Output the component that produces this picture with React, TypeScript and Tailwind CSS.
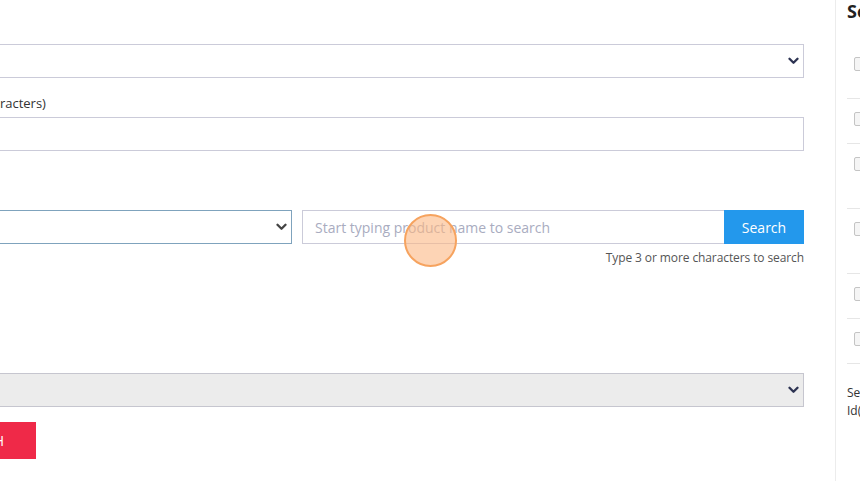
import React from "react";

function Chevron({ color }: { color: string }) {
  return (
    <svg width="11" height="8" viewBox="0 0 11 8" fill="none">
      <path d="M1.5 1.8 L5.5 5.8 L9.5 1.8" stroke={color} strokeWidth="2.3" strokeLinecap="round" strokeLinejoin="round" />
    </svg>
  );
}

function Check() {
  return <span className="mt-[13px] ml-[7px] block w-[14px] h-[14px] shrink-0 rounded-[2px] border border-[#c4c4c4] bg-[#f5f5f5]" />;
}

export default function App() {
  return (
    <div className="relative flex w-[860px] h-[481px] overflow-hidden bg-white text-[#333] font-['Open_Sans',sans-serif]">
      <main className="w-[835px] shrink-0 overflow-hidden">
        <div className="ml-[-186px] w-[990px] flex flex-col">
          <label className="pt-[16px] leading-[20px] mb-[8px] text-[13px]">Type</label>
          <div className="h-[34px] flex items-center justify-end pr-[4px] border border-[#cbcbd9] bg-white">
            <Chevron color="#2d3352" />
          </div>

          <label className="mt-[15px] mb-[4px] leading-[20px] text-[13px] whitespace-nowrap">Meta description (max 160 characters)</label>
          <div className="h-[34px] border border-[#cbcbd9] bg-white" />

          <label className="mt-[31px] mb-[8px] leading-[20px] text-[13px]">Product</label>
          <div className="flex h-[34px]">
            <div className="w-[478px] flex items-center justify-end pr-[4px] border border-[#7fa3bd] bg-white">
              <Chevron color="#444" />
            </div>
            <div className="ml-[10px] flex-1 flex items-center pl-[12px] border border-[#cbcbd9] border-r-0 text-[14px] text-[#a9acbf]">
              Start typing product name to search
            </div>
            <button className="w-[80px] bg-[#2398ec] text-white text-[14px]">Search</button>
          </div>
          <div className="mt-[5px] leading-[18px] text-[12px] tracking-[-0.1px] text-[#555] text-right">Type 3 or more characters to search</div>

          <label className="mt-[78px] mb-[8px] leading-[20px] text-[13px]">Status</label>
          <div className="h-[34px] flex items-center justify-end pr-[4px] border border-[#c6c6cf] bg-[#ececec]">
            <Chevron color="#2d3352" />
          </div>

          <div className="mt-[15px]">
            <button className="h-[37px] w-[222px] flex items-center justify-end pr-[32px] bg-[#ef2948] text-white text-[14px] uppercase whitespace-nowrap">
              Save and publish
            </button>
          </div>
        </div>
      </main>

      <aside className="w-[280px] shrink-0 border-l border-[#ececec] pl-[11px]">
        <h2 className="h-[44px] text-[18px] leading-[22px] font-bold text-[#222]">Settings</h2>
        <div className="h-[55px] flex gap-2 border-b border-[#e6e6e6]"><Check /><span className="mt-[10px] text-[13px] leading-[20px]">Featured product</span></div>
        <div className="h-[45px] flex gap-2 border-b border-[#e6e6e6]"><Check /><span className="mt-[10px] text-[13px] leading-[20px]">Show on homepage</span></div>
        <div className="h-[65px] flex gap-2 border-b border-[#e6e6e6]"><Check /><span className="mt-[10px] text-[13px] leading-[20px]">Allow customers to leave reviews on this product</span></div>
        <div className="h-[65px] flex gap-2 border-b border-[#e6e6e6]"><Check /><span className="mt-[10px] text-[13px] leading-[20px]">Hide price until customer is logged in</span></div>
        <div className="h-[45px] flex gap-2 border-b border-[#e6e6e6]"><Check /><span className="mt-[10px] text-[13px] leading-[20px]">Free shipping</span></div>
        <div className="h-[45px] flex gap-2 border-b border-[#e6e6e6]"><Check /><span className="mt-[10px] text-[13px] leading-[20px]">Digital download</span></div>
        <p className="mt-[20px] text-[12px] leading-[18px] text-[#333]">
          Separate multiple product
          <br />
          Id(s) with commas.
        </p>
      </aside>

      <div className="absolute left-[404px] top-[214px] w-[53px] h-[53px] rounded-full border-2 border-[#f6a35f] bg-[#fbb784]/60" />
    </div>
  );
}
